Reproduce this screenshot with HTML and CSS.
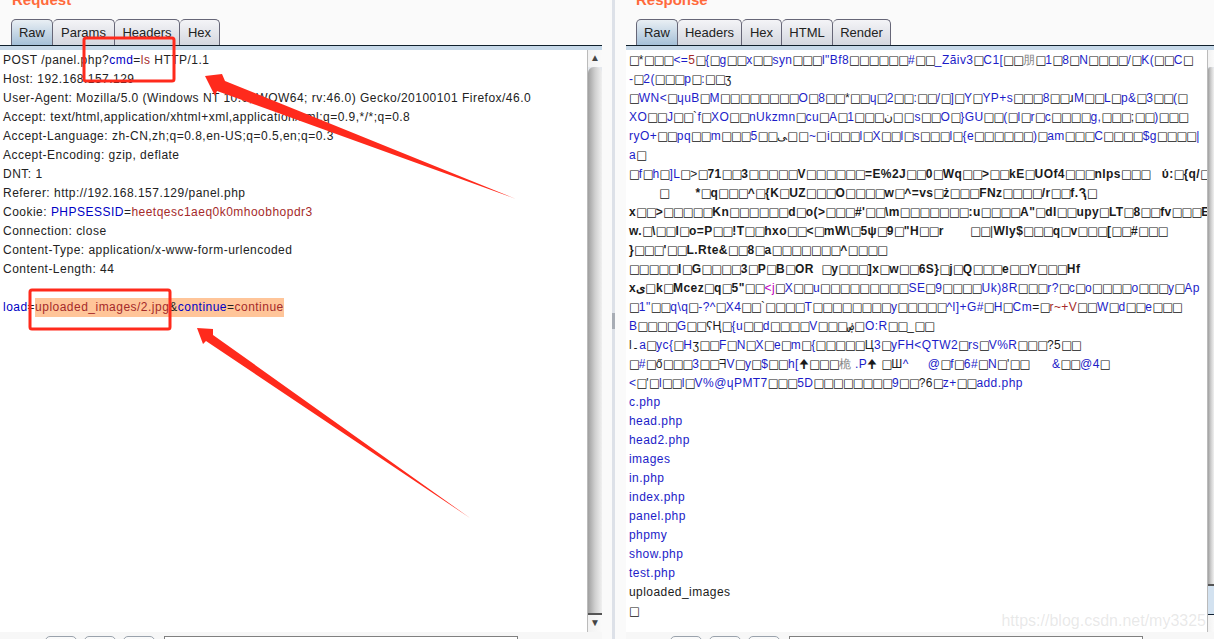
FILE: index.html
```html
<!DOCTYPE html>
<html lang="en">
<head>
<meta charset="utf-8">
<title>Repeater</title>
<link rel="stylesheet" href="styles.css">
</head>
<body>
<div class="app">
  <section class="panel panel-left">
    <h2 class="title">Request</h2>
    <div class="tabs">
      <span class="tab on w41">Raw</span><span class="tab w61">Params</span><span class="tab w65">Headers</span><span class="tab w40">Hex</span>
    </div>
    <div class="band"></div>
    <div class="body">
      <div class="editor">
        <div class="l">POST /panel.php?<span class="n">cmd</span>=<span class="v">ls</span> HTTP/1.1</div>
        <div class="l">Host: 192.168.157.129</div>
        <div class="l">User-Agent: Mozilla/5.0 (Windows NT 10.0; WOW64; rv:46.0) Gecko/20100101 Firefox/46.0</div>
        <div class="l">Accept: text/html,application/xhtml+xml,application/xml;q=0.9,*/*;q=0.8</div>
        <div class="l">Accept-Language: zh-CN,zh;q=0.8,en-US;q=0.5,en;q=0.3</div>
        <div class="l">Accept-Encoding: gzip, deflate</div>
        <div class="l">DNT: 1</div>
        <div class="l">Referer: http://192.168.157.129/panel.php</div>
        <div class="l">Cookie: <span class="n">PHPSESSID</span>=<span class="v">heetqesc1aeq0k0mhoobhopdr3</span></div>
        <div class="l">Connection: close</div>
        <div class="l">Content-Type: application/x-www-form-urlencoded</div>
        <div class="l">Content-Length: 44</div>
        <div class="l">&nbsp;</div>
        <div class="l"><span class="n">load</span>=<span class="hl"><span class="v">uploaded_images/2.jpg</span>&amp;<span class="n">continue</span>=<span class="v">continue</span></span></div>
      </div>
      <div class="sb">
        <div class="sb-up">▲</div>
        <div class="thumb"></div>
        <div class="sb-down">▼</div>
      </div>
    </div>
    <div class="foot foot-left">
      <span class="btn"></span><span class="btn"></span><span class="btn"></span><span class="field"></span>
    </div>
  </section>

  <div class="divider"><span class="grip"></span></div>

  <section class="panel panel-right">
    <h2 class="title">Response</h2>
    <div class="tabs">
      <span class="tab on w42">Raw</span><span class="tab w64">Headers</span><span class="tab w40">Hex</span><span class="tab w51">HTML</span><span class="tab w58">Render</span>
    </div>
    <div class="band"></div>
    <div class="body">
      <div class="editor resp">
        <div class="l"><i>□</i><span class="k">*</span><i>□□□</i>&lt;=<span class="v">5</span><i>□</i>{<i>□</i>g<i>□□</i>x<i>□□</i>syn<i>□□□</i>l"Bf8<i>□□□□□□</i>#<i>□□</i>_Zãiv3<i>□</i>C1[<i>□□</i><span class="g">朋</span><i>□</i>1<i>□</i>8<i>□</i>N<i>□□□□</i>/<i>□</i>K(<i>□□</i>C<i>□</i></div>
        <div class="l">-<i>□</i>2(<i>□□□</i>p<i>□</i>:<i>□□</i><span class="k">ʒ</span></div>
        <div class="l"><i>□</i>WN&lt;<i>□</i>ɥuB<i>□</i>M<i>□□□□□□□□</i>O<i>□</i>8<i>□□</i><span class="k">*</span><i>□□</i>ɥ<i>□</i>2<i>□□</i>:<i>□□</i>/<i>□</i>]<i>□</i>Y<i>□</i>YP+s<i>□□□</i>8<i>□□</i><span class="k">ɹ</span>M<i>□□</i>L<i>□</i>p&amp;<i>□</i>3<i>□□</i>(<i>□</i></div>
        <div class="l">XO<i>□□</i>J<i>□□</i><span class="k">`</span>f<i>□</i>XO<i>□□</i>nUkzmn<i>□</i>cu<i>□</i>A<i>□</i>1<i>□□□</i><span class="k">ن</span><i>□□</i>s<i>□□</i>O<i>□</i>}GU<i>□□</i>(<i>□</i>l<i>□</i>r<i>□</i>c<i>□□□□</i>g,<i>□□□</i><span class="k">;</span><i>□□</i>)<i>□□□</i></div>
        <div class="l">ryO+<i>□□</i>pq<i>□□</i>m<i>□□□</i>5<i>□□</i><span class="k">ﻰ</span><i>□□</i>~<i>□</i>i<i>□□□</i>l<i>□</i>X<i>□□</i>l<i>□</i>s<i>□□□</i>l<i>□</i>{e<i>□□□□□□</i>)<i>□</i>am<i>□□□</i>C<i>□□□□</i>$g<i>□□□□</i>|</div>
        <div class="l">a<i>□</i></div>
        <div class="l"><i>□</i>f<i>□</i>h<i>□</i>]L<i>□</i><span class="k">&gt;<i>□</i><strong>71</strong><i>□□</i><strong>3</strong><i>□□□□□</i><strong>V</strong><i>□□□□□□</i><strong>=E%2J</strong><i>□□</i><strong>0</strong><i>□</i><strong>Wq</strong><i>□□</i><strong>&gt;</strong><i>□□</i><strong>kE</strong><i>□</i><strong>UOf4</strong><i>□□□</i><strong>nlps</strong><i>□□□</i>   <strong>ύ:</strong><i>□</i><strong>{q/</strong><i>□</i></span></div>
        <div class="l k">        <i>□</i>       <strong>*</strong><i>□</i><strong>q</strong><i>□□□</i><strong>^</strong><i>□</i><strong>{K</strong><i>□</i><strong>UZ</strong><i>□□□</i><strong>O</strong><i>□□□□</i><strong>w</strong><i>□</i><strong>^=vs</strong><i>□</i><strong>ż</strong><i>□□□</i><strong>FNz</strong><i>□□□□</i><strong>/r</strong><i>□□</i><strong>f.Ԇ</strong><i>□</i></div>
        <div class="l k"><strong>x</strong><i>□□</i><strong>&gt;</strong><i>□□□□□</i><strong>Kn</strong><i>□□□□□□</i><strong>d</strong><i>□</i><strong>o(&gt;</strong><i>□□□</i><strong>#'</strong><i>□□</i><strong>\m</strong><i>□□□□□□□</i><strong>:u</strong><i>□□□□</i><strong>A"</strong><i>□</i><strong>dl</strong><i>□□</i><strong>upy</strong><i>□</i><strong>LT</strong><i>□</i><strong>8</strong><i>□□</i><strong>fv</strong><i>□□□</i><strong>E</strong></div>
        <div class="l k"><strong>w.</strong><i>□</i><strong>\</strong><i>□□</i><strong>l</strong><i>□</i><strong>o=P</strong><i>□□</i><strong>!T</strong><i>□□</i><strong>hxo</strong><i>□□</i><strong>&lt;</strong><i>□</i><strong>mW\</strong><i>□</i><strong>5ψ</strong><i>□</i><strong>9</strong><i>□</i><strong>"H</strong><i>□□</i><strong>r</strong>       <i>□□</i>|<strong>Wly$</strong><i>□□□</i><strong>q</strong><i>□</i><strong>v</strong><i>□□□</i><strong>[</strong><i>□□</i><strong>#</strong><i>□□□</i></div>
        <div class="l k"><strong>}</strong><i>□□□</i><strong>'</strong><i>□□</i><strong>L.Rte&amp;</strong><i>□□</i><strong>8</strong><i>□</i><strong>a</strong><i>□□□□□□□</i><strong>^</strong><i>□□□□</i></div>
        <div class="l k"><i>□□□□□</i><strong>l</strong><i>□</i><strong>G</strong><i>□□□□</i><strong>3</strong><i>□</i><strong>P</strong><i>□</i><strong>B</strong><i>□</i><strong>OR</strong>  <i>□</i><strong>y</strong><i>□□□</i><strong>]x</strong><i>□</i><strong>w</strong><i>□□</i><strong>6S}</strong><i>□</i><strong>j</strong><i>□</i><strong>Q</strong><i>□□□</i><strong>e</strong><i>□□</i><strong>Y</strong><i>□□□</i><strong>Hf</strong></div>
        <div class="l"><span class="k"><strong>xی</strong><i>□</i><strong>k</strong><i>□</i><strong>Mcez</strong><i>□</i><strong>q</strong><i>□</i><strong>5"</strong><i>□□</i></span><span class="p">&lt;j</span><i>□</i>X<i>□□</i>u<i>□□□□□□□□□</i>SE<i>□</i>9<i>□□□□</i>Uk)8R<i>□□□</i>r?<i>□</i>c<i>□</i>o<i>□□□□</i>o<i>□□□</i>y<i>□</i>Ap</div>
        <div class="l"><i>□</i>1"<i>□□</i>q\q<i>□</i>-?^<i>□</i>X4<i>□□</i><span class="k">`</span><i>□□□□</i>T<i>□□□□□□□□</i>y<i>□□□□□</i>^l]+G#<i>□</i>H<i>□</i>Cm<span class="k">=</span><i>□</i><span class="v">r~+V</span><i>□□</i>W<i>□</i>d<i>□□</i>e<i>□□□</i></div>
        <div class="l">B<i>□□□□</i>G<i>□□</i><span class="k">ʕⱧ</span><i>□</i>{u<i>□□</i>d<i>□□□□</i>V<i>□□□</i><span class="k">ۻ</span><i>□</i>O:R<i>□□</i><span class="k">_</span><i>□□</i></div>
        <div class="l"><span class="k">l۔</span>a<i>□</i>yc{<i>□</i>H<span class="k">ʒ</span><i>□□</i>F<i>□</i>N<i>□</i>X<i>□</i>e<i>□</i>m<i>□</i>{<i>□□□□□</i><span class="k">Ц</span>3<i>□</i>yFH&lt;QTW2<i>□</i>rs<i>□</i>V%R<i>□□□</i><span class="k">?5</span><i>□□</i></div>
        <div class="l"><i>□</i>#<i>□</i><span class="k">ő</span><i>□□□</i>3<i>□□</i><span class="k">ᖷ</span>V<i>□</i>y<i>□</i>$<i>□□</i>h[<span class="k">🠉</span><i>□□□</i><span class="g">桅</span> .P<span class="k">🠉</span> <i>□</i><span class="k">Ш</span>^     @<i>□</i>f<i>□</i>6#<i>□</i>N<i>□</i><span class="k">'</span><i>□□</i>      &amp;<i>□□</i>@4<i>□</i></div>
        <div class="l">&lt;<i>□</i><span class="k">'</span><i>□</i>l<i>□□</i>l<i>□</i>V%@ɥPMT7<i>□□□</i>5D<i>□□□□□□□□</i>9<i>□□</i><span class="k">?6</span><i>□</i>z+<i>□□</i>add.php</div>
        <div class="l">c.php</div>
        <div class="l">head.php</div>
        <div class="l">head2.php</div>
        <div class="l">images</div>
        <div class="l">in.php</div>
        <div class="l">index.php</div>
        <div class="l">panel.php</div>
        <div class="l">phpmy</div>
        <div class="l">show.php</div>
        <div class="l">test.php</div>
        <div class="l k">uploaded_images</div>
        <div class="l"><i>□</i></div>
      </div>
      <div class="sb sb-cut">
        <div class="sb-up"></div>
        <div class="thumb thumb-short"></div>
        <div class="track"></div>
        <div class="sb-down"></div>
      </div>
    </div>
    <div class="foot foot-right">
      <span class="btn"></span><span class="btn"></span><span class="btn"></span><span class="field"></span>
    </div>
  </section>

  <svg class="marks" width="1214" height="639" viewBox="0 0 1214 639" aria-hidden="true">
    <rect x="84" y="38" width="90" height="43" rx="2" fill="none" stroke="#ff2a1c" stroke-width="3"/>
    <rect x="30" y="290" width="140" height="39" rx="2" fill="none" stroke="#ff2a1c" stroke-width="3"/>
    <polygon points="205,76 222,74 225,81 516,199 217,91 215,96" fill="#ff2a1c"/>
    <polygon points="197,328 213,329 213,335 470,518 206,341 203,344" fill="#ff2a1c"/>
  </svg>
  <div class="wm">https://blog.csdn.net/my3325</div>
</div>
</body>
</html>
```

FILE: styles.css
```css
* { box-sizing: border-box; }
html, body { margin: 0; padding: 0; height: 100%; overflow: hidden; }
body { background: #fafafa; font-family: "Liberation Sans", Arial, sans-serif; }

.app { position: relative; display: flex; width: 1214px; height: 639px; overflow: hidden; }

.panel { display: flex; flex-direction: column; height: 639px; }
.panel-left { width: 602px; flex: none; }
.panel-right { flex: 1; min-width: 0; }

.title {
  margin: 0;
  height: 19px;
  overflow: hidden;
  line-height: 0;
  font-size: 15px;
  font-weight: bold;
  color: #ff6a3c;
}
.panel-left .title { padding-left: 12px; }
.panel-right .title { padding-left: 10px; }

.tabs { display: flex; height: 26px; padding-left: 11px; }
.panel-right .tabs { padding-left: 10px; }
.tab {
  height: 26px;
  border: 1px solid #667;
  border-bottom: none;
  border-left-width: 0;
  border-radius: 5px 5px 0 0;
  background: linear-gradient(#f4f4f7, #d4d7df);
  font-size: 13px;
  line-height: 26px;
  text-align: center;
  color: #222;
}
.tab:first-child { border-left-width: 1px; }
.tab.on { background: linear-gradient(#e9eff4, #a5c0d8); }
.w40 { width: 40px; } .w41 { width: 42px; } .w42 { width: 42px; } .w51 { width: 51px; }
.w58 { width: 58px; } .w61 { width: 62px; } .w64 { width: 64px; } .w65 { width: 65px; }

.band { height: 5px; border-top: 1px solid #10202c; background: #c6d8e8; }

.body { display: flex; height: 582px; background: #fff; }
.editor {
  flex: 1;
  min-width: 0;
  padding: 1px 0 0 3px;
  overflow: hidden;
  font-size: 12px;
  letter-spacing: 0.48px;
  color: #222;
  background: #fff;
}
.l { height: 19px; line-height: 19px; white-space: pre; }
.n { color: #0000c4; }
.v { color: #a52a2a; }
.p { color: #c000c0; }
.k { color: #1a1a1a; }
.g { color: #888; }
.hl { background: #ffc599; display: inline-block; height: 19px; }
.resp { color: #1c1cc8; letter-spacing: 0.45px; }
.resp strong { font-weight: bold; }
i {
  font-family: "DejaVu Sans", sans-serif;
  font-style: normal;
  font-size: 11.5px;
  line-height: 0;
  letter-spacing: -1.05px;
  color: #111;
}

.sb { display: flex; flex-direction: column; width: 15px; flex: none; border-left: 1px solid #bbb; background: #e4e8ee; }
.sb-up, .sb-down {
  height: 17px;
  flex: none;
  font-size: 10px;
  line-height: 16px;
  text-align: center;
  color: #444;
  background: linear-gradient(90deg, #f2f2f2, #fafafa);
}
.thumb {
  flex: 1;
  border-radius: 6px 6px 0 0;
  background: linear-gradient(90deg, #a0a0a0, #cfcfcf 50%, #f0f0f0);
  border-bottom: 2px solid #555;
}
.sb-cut { width: 7px; }
.thumb-short { flex: none; height: 519px; }
.track { flex: 1; background: #d3e2f0; border-bottom: 1px solid #123; }

.foot { display: flex; align-items: flex-start; height: 7px; padding-top: 4px; gap: 7px; background: #f7f7f7; }
.foot-left { padding-left: 45px; }
.foot-right { padding-left: 44px; }
.btn { width: 32px; height: 8px; flex: none; border: 1px solid #9aa2ac; border-radius: 5px 5px 0 0; background: #fafafa; }
.field { height: 8px; margin-left: 2px; flex: none; border: 1px solid #808080; background: #fff; }
.foot-left .field { width: 354px; }
.foot-right .field { width: 354px; }

.divider { position: relative; width: 24px; flex: none; padding-left: 10px; }
.divider::before { content: ""; display: block; width: 3px; height: 100%; margin-left: 0; background: #dde1e8; }
.grip { position: absolute; left: 10px; top: 313px; width: 3px; height: 16px; background: #a8adb5; }

.marks { position: absolute; left: 0; top: 0; pointer-events: none; }
.wm {
  position: absolute;
  right: 8px;
  top: 612px;
  font-size: 16px;
  color: rgba(150, 150, 150, 0.22);
  white-space: nowrap;
}
```
